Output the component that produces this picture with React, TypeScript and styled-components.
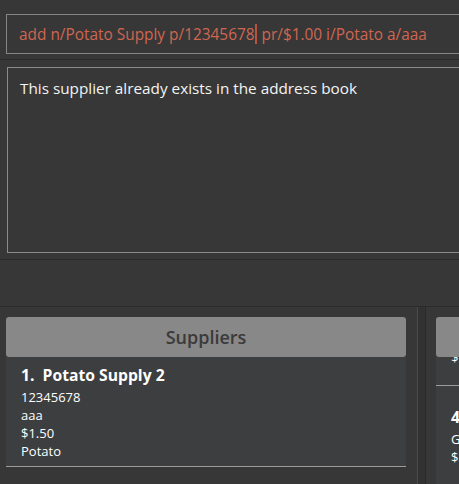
import React from "react";
import styled, { createGlobalStyle } from "styled-components";

const GlobalStyle = createGlobalStyle`
  html, body { margin: 0; padding: 0; background: #373737; }
  body { font-family: "Open Sans", "Noto Sans", sans-serif; }
`;

const Window = styled.div`
  width: 459px;
  height: 484px;
  overflow: hidden;
  display: flex;
  flex-direction: column;
  background: #373737;
`;

const CommandPane = styled.div`
  height: 60px;
  box-sizing: border-box;
  padding: 14px 0 0 6px;
  border-bottom: 1px solid #2b2b2b;
  flex-shrink: 0;
`;

const CommandField = styled.div`
  width: 480px;
  height: 40px;
  box-sizing: border-box;
  border: 1px solid #858585;
  display: flex;
  align-items: center;
  padding-left: 12px;
  color: #d06651;
  font-size: 15.4px;
  white-space: nowrap;
`;

const Caret = styled.span`
  display: inline-block;
  width: 2px;
  height: 20px;
  background: #b8533e;
  margin: 0 1px 0 0;
`;

const ResultPane = styled.div`
  height: 200px;
  box-sizing: border-box;
  padding: 7px 0 0 7px;
  border-bottom: 1px solid #2b2b2b;
  flex-shrink: 0;
`;

const ResultBox = styled.div`
  width: 480px;
  height: 186px;
  box-sizing: border-box;
  border: 1px solid #8a8a8a;
  padding: 9px 12px;
  color: #f4f4f4;
  font-size: 15.3px;
  line-height: 22px;
`;

const StatusBand = styled.div`
  height: 47px;
  box-sizing: border-box;
  border-bottom: 1px solid #2b2b2b;
  flex-shrink: 0;
`;

const Lists = styled.div`
  flex: 1;
  display: flex;
  min-height: 0;
`;

const Panel = styled.div<{ $width?: number; $padLeft: number }>`
  ${(p) => (p.$width ? `width: ${p.$width}px; flex-shrink: 0;` : "flex: 1;")}
  box-sizing: border-box;
  padding: 10px 0 0 ${(p) => p.$padLeft}px;
  display: flex;
  flex-direction: column;
  min-width: 0;
  overflow: hidden;
`;

const Divider = styled.div`
  width: 9px;
  flex-shrink: 0;
  box-sizing: border-box;
  background: #323232;
  border-left: 1px solid #4a4a4a;
  border-right: 1px solid #2a2a2a;
`;

const Header = styled.div`
  width: 400px;
  height: 40px;
  flex-shrink: 0;
  box-sizing: border-box;
  background: #888888;
  border-radius: 3px;
  display: flex;
  align-items: center;
  justify-content: center;
  color: #3a3a3a;
  font-size: 18px;
  font-weight: 600;
`;

const Viewport = styled.div`
  width: 400px;
  flex: 1;
  overflow: hidden;
`;

const ListContent = styled.div``;

const Card = styled.div<{ $padTop: number; $padBottom: number }>`
  width: 400px;
  box-sizing: border-box;
  background: #3c3e3f;
  border-bottom: 1px solid #9c9c9c;
  padding: ${(p) => p.$padTop}px 15px ${(p) => p.$padBottom}px 15px;
  display: flex;
  flex-direction: column;
  white-space: nowrap;
`;

const Title = styled.div`
  color: #ffffff;
  font-size: 15.7px;
  font-weight: 700;
  line-height: 24px;
  margin-bottom: 1px;
`;

const Line = styled.div`
  color: #ffffff;
  font-size: 13px;
  line-height: 18px;
`;

type Entry = { idx: number; name: string; lines: string[] };

const EntryCard = ({ s, padTop, padBottom }: { s: Entry; padTop: number; padBottom: number }) => (
  <Card $padTop={padTop} $padBottom={padBottom}>
    <Title>{s.idx}.&nbsp;&nbsp;{s.name}</Title>
    {s.lines.map((l, i) => (
      <Line key={i}>{l}</Line>
    ))}
  </Card>
);

export default function App() {
  const suppliers: Entry[] = [
    { idx: 1, name: "Potato Supply 2", lines: ["12345678", "aaa", "$1.50", "Potato"] },
  ];
  const orders: Entry[] = [
    { idx: 3, name: "Fresh Goods", lines: ["Carrot", "$2.00"] },
    { idx: 4, name: "Green Grocer", lines: ["Grapes", "$3.20"] },
  ];
  const scroll = 71;
  return (
    <>
      <GlobalStyle />
      <Window>
        <CommandPane>
          <CommandField>
            <span>add n/Potato Supply p/12345678</span>
            <Caret />
            <span>&nbsp;pr/$1.00 i/Potato a/aaa</span>
          </CommandField>
        </CommandPane>
        <ResultPane>
          <ResultBox>This supplier already exists in the address book</ResultBox>
        </ResultPane>
        <StatusBand />
        <Lists>
          <Panel $width={417} $padLeft={6}>
            <Header>Suppliers</Header>
            <Viewport>
              {suppliers.map((s) => (
                <EntryCard key={s.idx} s={s} padTop={6} padBottom={6} />
              ))}
            </Viewport>
          </Panel>
          <Divider />
          <Panel $padLeft={10}>
            <Header>Orders</Header>
            <Viewport>
              <ListContent style={{ transform: `translateY(-${scroll}px)` }}>
                {orders.map((s) => (
                  <EntryCard key={s.idx} s={s} padTop={19} padBottom={19} />
                ))}
              </ListContent>
            </Viewport>
          </Panel>
        </Lists>
      </Window>
    </>
  );
}
